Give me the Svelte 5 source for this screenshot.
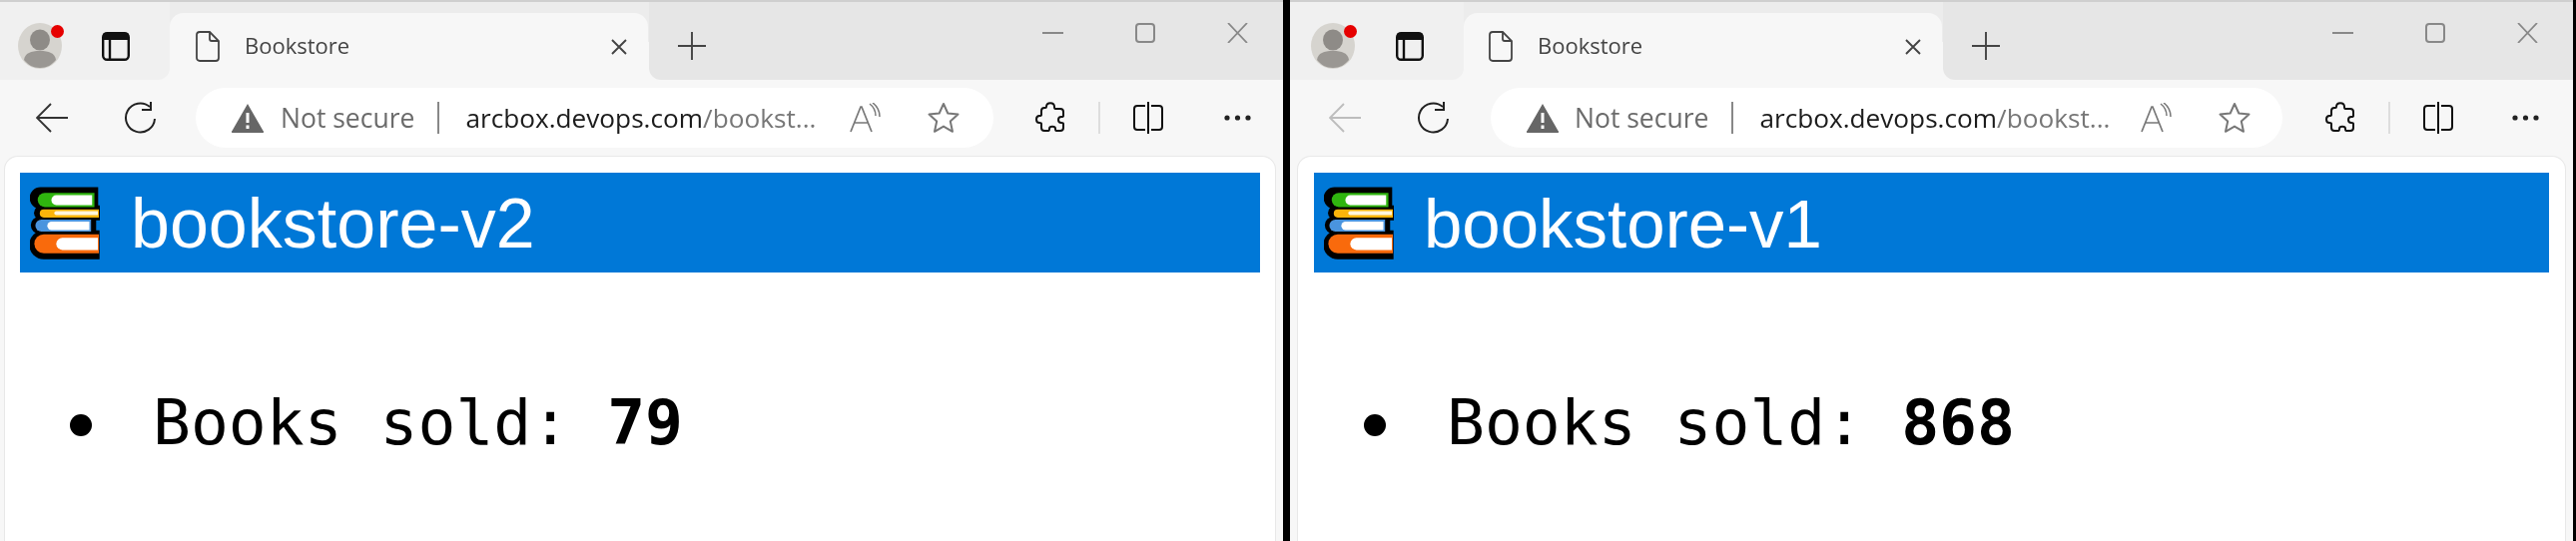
<script lang="ts">
	const windows = [
		{ side: 'left', name: 'bookstore-v2', sold: 79, canGoBack: true },
		{ side: 'right', name: 'bookstore-v1', sold: 868, canGoBack: false }
	];
</script>

<div class="screen">
	{#each windows as w}
		<section class="window {w.side}">
			<header class="strip">
				<div class="lead">
					<span class="avatar">
						<svg width="44" height="46" viewBox="0 0 44 46">
							<ellipse cx="22" cy="23" rx="22" ry="23" fill="#d6d4cf" />
							<ellipse cx="22" cy="17" rx="10" ry="10.5" fill="#8e8b87" />
							<path d="M6 37c1-7 7-9 16-9s15 2 16 9c-4 5-9 8-16 8S10 42 6 37z" fill="#9a9793" />
						</svg>
						<i class="dot"></i>
					</span>
					<svg class="tabs-icon" width="28" height="29" viewBox="0 0 28 29" fill="none" stroke="#111" stroke-width="2.4">
						<rect x="1.2" y="1.2" width="25.6" height="26.6" rx="4" />
						<path d="M1 3.5a3 3 0 0 1 3-3h20a3 3 0 0 1 3 3V8H1z" fill="#111" stroke="none" />
						<path d="M8 8v20" />
					</svg>
				</div>
				<div class="tab">
					<svg width="24" height="31" viewBox="0 0 24 31" fill="none" stroke="#444" stroke-width="1.8">
						<path d="M4 1h10l9 9v17a3 3 0 0 1-3 3H4a3 3 0 0 1-3-3V4a3 3 0 0 1 3-3z" />
						<path d="M14 1v7a2 2 0 0 0 2 2h7" />
					</svg>
					<span class="tab-title">Bookstore</span>
					<svg class="tab-close" width="16" height="16" viewBox="0 0 16 16" stroke="#444" stroke-width="1.9">
						<path d="M1 1l14 14M15 1L1 15" />
					</svg>
				</div>
				<div class="rest">
					<svg class="plus" width="28" height="28" viewBox="0 0 28 28" stroke="#444" stroke-width="1.9">
						<path d="M0 14h28M14 0v28" />
					</svg>
					<div class="controls">
						<svg width="21" height="20" viewBox="0 0 21 20" stroke="#888" stroke-width="2"><path d="M0 10h21" /></svg>
						<svg width="20" height="20" viewBox="0 0 20 20" fill="none" stroke="#888" stroke-width="2"><rect x="1" y="1" width="18" height="18" rx="3" /></svg>
						<svg width="21" height="20" viewBox="0 0 21 20" stroke="#888" stroke-width="1.8"><path d="M1 0l19 20M20 0L1 20" /></svg>
					</div>
				</div>
			</header>

			<nav class="toolbar">
				<svg class="back" class:off={!w.canGoBack} width="32" height="30" viewBox="0 0 32 30" fill="none" stroke="currentColor" stroke-width="1.9">
					<path d="M32 15H1M15 1L1 15l14 14" />
				</svg>
				<svg class="reload" width="33" height="32" viewBox="0 0 33 32" fill="none" stroke="#222" stroke-width="2">
					<path d="M26 5a14.5 14.5 0 1 0 5 12" />
					<path d="M27 0v8h-9" />
				</svg>
				<div class="address">
					<svg width="32" height="30" viewBox="0 0 32 30">
						<path d="M16 1L31.500 28a1 1 0 0 1-1 2H1.500a1 1 0 0 1-1-2z" fill="#666" />
						<path d="M14.500 10h3v10h-3zM14.500 22.500h3v3.500h-3z" fill="#fff" />
					</svg>
					<span class="secure">Not secure</span>
					<i class="sep"></i>
					<span class="url"><b>arcbox.devops.com</b>/bookst...</span>
					<svg class="aloud" width="31" height="30" viewBox="0 0 31 30" fill="none" stroke="#777" stroke-width="1.7">
						<path d="M1 29L11 4h1l10 25M5 20h13" />
						<path d="M20 1c4 3 6 7 6 12M23 0c4 3 7 8 7 14" stroke-width="1.5" />
					</svg>
					<svg class="star" width="32" height="32" viewBox="0 0 32 32" fill="none" stroke="#777" stroke-width="2" stroke-linejoin="round">
						<path d="M16 2l4.300 9.500 10.200 1.100-7.700 6.900 2.200 10.300L16 24.600 7 29.800l2.200-10.300-7.700-6.900 10.200-1.100z" />
					</svg>
				</div>
				<svg class="puzzle" width="29" height="32" viewBox="0 0 29 32" fill="none" stroke="#111" stroke-width="2" stroke-linejoin="round">
					<path d="M11 5c0-5 8-5 8 0 0 1 0 2 1 2h5c2 0 3 1 3 3v4c0 1-1 1-2 1-4 0-4 6 0 6 1 0 2 0 2 1v4c0 2-1 3-3 3h-4c-1 0-1-1-1-2 0-3-6-3-6 0 0 1 0 2-1 2H9c-2 0-3-1-3-3v-4c0-1-1-1-2-1-4 0-4-7 0-7 1 0 2 0 2-1v-4c0-2 1-3 3-3h1c1 0 1-1 1-1z" />
				</svg>
				<i class="tool-sep"></i>
				<svg class="split" width="32" height="32" viewBox="0 0 32 32" fill="none" stroke="#111" stroke-width="2">
					<path d="M13 4H5a3 3 0 0 0-3 3v18a3 3 0 0 0 3 3h8M19 4h8a3 3 0 0 1 3 3v18a3 3 0 0 1-3 3h-8M16 0v32" />
				</svg>
				<svg class="more" width="27" height="6" viewBox="0 0 27 6" fill="#222">
					<circle cx="3" cy="3" r="2.600" /><circle cx="13.500" cy="3" r="2.600" /><circle cx="24" cy="3" r="2.600" />
				</svg>
			</nav>

			<main class="card">
				<div class="banner">
					<svg width="70" height="73" viewBox="44 75 207 215">
						<path d="M75 76H246V140H75a32 32 0 0 1 0-64z" fill="#000" />
						<path d="M78 130H252V174H78a22 22 0 0 1 0-44z" fill="#000" />
						<path d="M72 163H240V214H72a25 25 0 0 1 0-51z" fill="#000" />
						<path d="M85 204H250V290H85a43 43 0 0 1 0-86z" fill="#000" />
						<path d="M88 93H235V135H88a21 21 0 0 1 0-42z" fill="#2fb50f" />
						<path d="M122 100H228V129H122a14 14 0 0 1 0-29z" fill="#fff" />
						<path d="M85 142H248V166H85a12 12 0 0 1 0-24z" fill="#fbb40a" />
						<path d="M122 147H245V159H122a6 6 0 0 1 0-12z" fill="#fff6dc" />
						<path d="M78 172H225V208H78a18 18 0 0 1 0-36z" fill="#4a94de" />
						<path d="M108 178H220V203H108a12 12 0 0 1 0-25z" fill="#fff" />
						<path d="M85 216H248V272H85a28 28 0 0 1 0-56z" fill="#f96a0c" />
						<path d="M140 226H245V262H140a18 18 0 0 1 0-36z" fill="#fff" />
					</svg>
					<h1>{w.name}</h1>
				</div>
				<ul>
					<li><span>Books sold: <strong>{w.sold}</strong></span></li>
				</ul>
			</main>
		</section>
	{/each}
</div>

<style>
	:global(body) {
		margin: 0;
		background: #fff;
	}

	.screen {
		display: flex;
		width: 2580px;
		height: 542px;
		overflow: hidden;
		background: #000;
		gap: 7px;
		filter: blur(0.5px);
	}

	.window {
		--avatar-pad: 18px;
		--lead-width: 170px;
		--lead-gap: 40px;
		--tab-pad: 26px;
		--back-pad: 36px;
		--pill-gap: 39px;
		--pill-width: 799px;
		--secure-gap: 17px;
		--url-gap: 33px;
		--star-pad: 34px;
		--puzzle-gap: 42px;
		--more-gap: 60px;
		--banner-left: 15px;
		--banner-right: 15px;
		--title-gap: 31px;
		--title-size: 70px;
		width: 1285px;
		height: 542px;
		flex: none;
		display: flex;
		flex-direction: column;
		background: #f7f7f7;
		font-family: "Open Sans", sans-serif;
	}

	.window.right {
		--avatar-pad: 21px;
		--lead-width: 174px;
		--lead-gap: 41px;
		--tab-pad: 25px;
		--back-pad: 39px;
		--pill-gap: 41px;
		--pill-width: 793px;
		--secure-gap: 16px;
		--url-gap: 30px;
		--star-pad: 32px;
		--puzzle-gap: 43px;
		--more-gap: 58px;
		--banner-left: 16px;
		--banner-right: 16px;
		--title-gap: 30px;
		--title-size: 69px;
	}

	.strip {
		display: flex;
		height: 78px;
		border-top: 2px solid #cfcfcf;
		background: linear-gradient(#ececec 40px, #f7f7f7 40px);
	}

	.lead {
		display: flex;
		align-items: flex-start;
		gap: var(--lead-gap);
		box-sizing: border-box;
		width: var(--lead-width);
		padding: 21px 0 0 var(--avatar-pad);
		background: #f0f0f0;
		border-bottom-right-radius: 12px;
	}

	.avatar {
		position: relative;
		display: block;
		width: 44px;
		height: 46px;
	}

	.avatar svg {
		display: block;
	}

	.dot {
		position: absolute;
		right: -2px;
		top: 2px;
		width: 13px;
		height: 13px;
		border-radius: 50%;
		background: #e60000;
	}

	.tabs-icon {
		margin-top: 9px;
	}

	.tab {
		display: flex;
		align-items: center;
		box-sizing: border-box;
		width: 479px;
		height: 67px;
		margin-top: 11px;
		padding: 0 21px 0 var(--tab-pad);
		background: #f7f7f7;
		border-radius: 14px 14px 0 0;
	}

	.tab-title {
		margin: 0 0 3px 25px;
		font-size: 22px;
		color: #444;
		white-space: nowrap;
	}

	.tab-close {
		margin-left: auto;
	}

	.rest {
		flex: 1;
		display: flex;
		align-items: flex-start;
		margin-left: 1px;
		background: #e6e6e6;
		border-bottom-left-radius: 12px;
	}

	.plus {
		margin: 30px 0 0 29px;
	}

	.controls {
		margin-left: auto;
		margin-right: 35px;
		margin-top: 21px;
		display: flex;
		gap: 72px;
	}

	.toolbar {
		display: flex;
		align-items: center;
		height: 76px;
		box-sizing: border-box;
		padding: 8px 0 8px var(--back-pad);
	}

	.toolbar > :global(svg) {
		flex: none;
	}

	.back {
		color: #333;
		margin-right: 56px;
	}

	.back.off {
		color: #bdbdbd;
	}

	.address {
		display: flex;
		align-items: center;
		flex: none;
		box-sizing: border-box;
		width: var(--pill-width);
		height: 60px;
		margin-left: var(--pill-gap);
		margin-right: var(--puzzle-gap);
		padding: 0 var(--star-pad) 0 36px;
		background: #fff;
		border-radius: 30px;
	}

	.secure {
		margin-left: var(--secure-gap);
		font-size: 26.500px;
		color: #6b6b6b;
		white-space: nowrap;
	}

	.sep {
		width: 2px;
		height: 32px;
		margin: 0 26px 0 23px;
		background: #888;
	}

	.url {
		width: 352px;
		flex: none;
		font-size: 26.200px;
		color: #777;
		white-space: nowrap;
	}

	.url b {
		font-weight: 400;
		color: #1c1c1c;
	}

	.aloud {
		margin-left: var(--url-gap);
	}

	.star {
		margin-left: auto;
	}

	.tool-sep {
		flex: none;
		width: 2px;
		height: 32px;
		margin: 0 32px 0 34px;
		background: #dedede;
	}

	.more {
		margin-left: var(--more-gap);
	}

	.card {
		flex: 1;
		margin: 0 7px 0 4px;
		padding: 16px var(--banner-right) 0 var(--banner-left);
		background: #fff;
		border: 1px solid #e8e8e8;
		border-bottom: 0;
		border-radius: 14px 14px 0 0;
	}

	.window.right .card {
		margin-left: 7px;
	}

	.banner {
		display: flex;
		align-items: center;
		gap: var(--title-gap);
		height: 100px;
		padding-left: 10px;
		background: #0078d7;
	}

	h1 {
		margin: 0 0 -2px;
		font-family: "Liberation Sans", Arial, sans-serif;
		font-weight: 400;
		font-size: var(--title-size);
		line-height: 1;
		color: #fff;
	}

	ul {
		margin: 114px 0 0;
		padding-left: 50px;
		list-style: none;
		font-family: "DejaVu Sans Mono", monospace;
		font-size: 63px;
		line-height: 73px;
		color: #000;
	}

	li {
		display: flex;
		align-items: center;
		gap: 61px;
	}

	li::before {
		content: "";
		flex: none;
		width: 22px;
		height: 22px;
		margin-top: 4px;
		border-radius: 50%;
		background: #000;
	}
</style>
